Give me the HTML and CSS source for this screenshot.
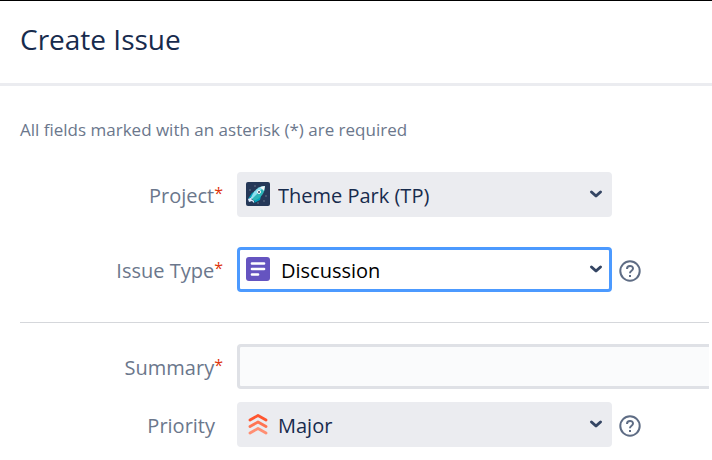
FILE: index.html
```html
<!DOCTYPE html>
<html lang="en">
<head>
    <meta charset="UTF-8">
    <meta name="viewport" content="width=device-width, initial-scale=1.0">
    <title>Create Issue</title>
    <link rel="stylesheet" href="styles.css">
</head>
<body>
    <header class="dialog-header">
        <h1>Create Issue</h1>
    </header>

    <form class="dialog-form">
        <p class="hint">All fields marked with an asterisk (*) are required</p>

        <div class="field">
            <label for="project">Project<span class="required">*</span></label>
            <div class="select-box">
                <svg class="icon" viewBox="0 0 24 24" aria-hidden="true">
                    <rect width="24" height="24" rx="2" fill="#253858"/>
                    <g fill="#505f79">
                        <circle cx="4" cy="8" r="1"/>
                        <circle cx="9" cy="4" r="1"/>
                        <circle cx="20" cy="14" r="1"/>
                        <circle cx="18" cy="19" r="1"/>
                        <circle cx="12" cy="21" r="1"/>
                    </g>
                    <path d="M10 9L6 11L2 17L7 15Z" fill="#00a3bf"/>
                    <path d="M15 14L14 18L8 21L10 16Z" fill="#00a3bf"/>
                    <path d="M19 4C13 4 8 8 5 16L8 19C15 16 19 11 19 4Z" fill="#2cb5b8"/>
                    <path d="M19 4C13 4 8 8 5 16L6 17L15 8Z" fill="#8ddff0"/>
                    <path d="M19 4L14 5L18 9Z" fill="#f4f5f7"/>
                    <circle cx="13" cy="10" r="1.500" fill="#253858" stroke="#fff"/>
                    <path d="M2 17L7 15L5 17L8 19L8 21L6 19L3 20Z" fill="#deebff"/>
                </svg>
                <select id="project">
                    <option>Theme Park (TP)</option>
                </select>
                <svg class="arrow" viewBox="0 0 14 10" aria-hidden="true"><path d="M2.500 3L7 7L11.500 3"/></svg>
            </div>
        </div>

        <div class="field issue-type">
            <label for="issue-type">Issue Type<span class="required">*</span></label>
            <div class="select-box active">
                <svg class="icon" viewBox="0 0 24 24" aria-hidden="true">
                    <rect width="24" height="24" rx="3" fill="#6554c0"/>
                    <path d="M6 6.500H18M6 12H18M6 17.500H12" stroke="#fff" stroke-width="2.700" stroke-linecap="round"/>
                </svg>
                <select id="issue-type">
                    <option>Discussion</option>
                </select>
                <svg class="arrow" viewBox="0 0 14 10" aria-hidden="true"><path d="M2.500 3L7 7L11.500 3"/></svg>
            </div>
            <a class="help" href="#" aria-label="Issue type help">
                <svg viewBox="0 0 22 22" aria-hidden="true">
                    <circle cx="11" cy="11" r="9.700"/>
                    <path d="M8 9C8 5 14 5 14 8.600C14 11 11 10.500 11 13.200M11 15V17"/>
                </svg>
            </a>
        </div>

        <hr>

        <div class="field">
            <label for="summary">Summary<span class="required">*</span></label>
            <input type="text" id="summary">
        </div>

        <div class="field">
            <label for="priority" class="optional">Priority</label>
            <div class="select-box">
                <svg class="icon" viewBox="0 0 24 24" aria-hidden="true">
                    <g fill="none" stroke-width="2.800" stroke-linecap="round" stroke-linejoin="round">
                        <path d="M4 8L12 3.500L20 8" stroke="#ff5630"/>
                        <path d="M4 14.500L12 10L20 14.500" stroke="#ff7452"/>
                        <path d="M4 21L12 16.500L20 21" stroke="#ff8f73"/>
                    </g>
                </svg>
                <select id="priority">
                    <option>Major</option>
                </select>
                <svg class="arrow" viewBox="0 0 14 10" aria-hidden="true"><path d="M2.500 3L7 7L11.500 3"/></svg>
            </div>
            <a class="help" href="#" aria-label="Priority help">
                <svg viewBox="0 0 22 22" aria-hidden="true">
                    <circle cx="11" cy="11" r="9.700"/>
                    <path d="M8 9C8 5 14 5 14 8.600C14 11 11 10.500 11 13.200M11 15V17"/>
                </svg>
            </a>
        </div>
    </form>
</body>
</html>
```
FILE: styles.css
```css
* {
    box-sizing: border-box;
}

body {
    margin: 0;
    border-top: 1px solid #000;
    background-color: #fff;
    color: #172b4d;
    font-family: "Open Sans", "Noto Sans", sans-serif;
    font-size: 20px;
}

.dialog-header {
    padding: 17px 20px 23px;
    border-bottom: 3px solid #ebecf0;
}

h1 {
    margin: 0;
    font-size: 28px;
    font-weight: 400;
    line-height: 42px;
}

.dialog-form {
    padding: 32px 3px 12px 20px;
}

.hint {
    margin: 0 0 30px;
    color: #6b778c;
    font-size: 17px;
    line-height: 24px;
}

.field {
    display: flex;
    align-items: center;
    margin-bottom: 13px;
}

.field.issue-type {
    margin: 30px 0;
}

label {
    flex: 0 0 203px;
    margin-right: 14px;
    padding-top: 2px;
    color: #6b778c;
    line-height: 28px;
    text-align: right;
}

label.optional {
    padding-right: 8px;
}

.required {
    color: #de350b;
    font-size: 16px;
    line-height: 1;
    vertical-align: 4px;
}

.select-box {
    position: relative;
    flex: 0 1 375px;
}

select,
input {
    width: 100%;
    height: 45px;
    border: 3px solid #ebecf0;
    border-radius: 4px;
    color: #172b4d;
    font: inherit;
}

select {
    display: block;
    appearance: none;
    padding: 1px 40px 0 38px;
    background-color: #ebecf0;
}

input {
    flex: 1;
    min-width: 0;
    padding: 0 10px;
    border-color: #dfe1e6;
    border-right: none;
    border-radius: 4px 0 0 4px;
    background-color: #fafbfc;
}

.active select {
    padding-left: 41px;
    border-color: #4c9aff;
    background-color: #fff;
    color: #000;
}

.icon {
    position: absolute;
    top: 10px;
    left: 9px;
    width: 24px;
    height: 24px;
}

.arrow {
    position: absolute;
    top: 17px;
    right: 9px;
    width: 14px;
    height: 10px;
    fill: none;
    stroke: #344563;
    stroke-width: 3;
    stroke-linecap: round;
    stroke-linejoin: round;
}

.icon,
.arrow {
    pointer-events: none;
}

.help {
    display: flex;
    margin-left: 7px;
    padding-top: 3px;
}

.help svg {
    width: 22px;
    height: 22px;
    fill: none;
    stroke: #5e6c84;
    stroke-width: 2;
}

hr {
    margin: 0 0 21px;
    border: none;
    border-top: 1px solid #d5d7db;
}
```
